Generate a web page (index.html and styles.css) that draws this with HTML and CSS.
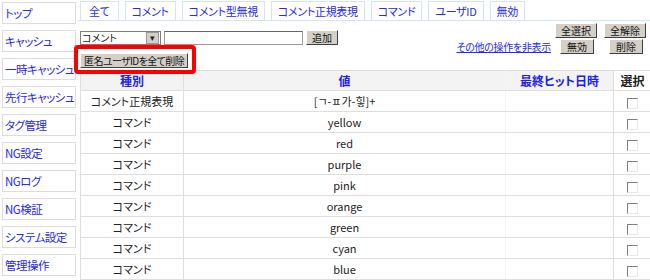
FILE: index.html
```html
<!DOCTYPE html>
<html lang="ja">
<head>
    <meta charset="UTF-8">
    <title>NG設定</title>
    <link rel="stylesheet" href="styles.css">
</head>
<body>
    <div class="page">
        <div class="side">
            <a class="nav">トップ</a>
            <a class="nav">キャッシュ</a>
            <a class="nav">一時キャッシュ</a>
            <a class="nav">先行キャッシュ</a>
            <a class="nav">タグ管理</a>
            <a class="nav">NG設定</a>
            <a class="nav">NGログ</a>
            <a class="nav">NG検証</a>
            <a class="nav">システム設定</a>
            <a class="nav">管理操作</a>
        </div>
        <div class="main">
            <div class="tabs">
                <a class="tab wide">全て</a>
                <a class="tab">コメント</a>
                <a class="tab">コメント型無視</a>
                <a class="tab">コメント正規表現</a>
                <a class="tab">コマンド</a>
                <a class="tab">ユーザID</a>
                <a class="tab">無効</a>
            </div>
            <div class="controls">
                <div class="left">
                    <div class="addrow">
                        <div class="select"><span>コメント</span><span class="arrow">▾</span></div>
                        <input type="text" class="text">
                        <button class="btn">追加</button>
                    </div>
                    <div class="anon">
                        <button class="btn">匿名ユーザIDを全て削除</button>
                        <div class="mark"></div>
                    </div>
                </div>
                <div class="right">
                    <div class="btnrow">
                        <button class="btn">全選択</button>
                        <button class="btn">全解除</button>
                    </div>
                    <div class="btnrow">
                        <a class="hide">その他の操作を非表示</a>
                        <button class="btn">無効</button>
                        <button class="btn">削除</button>
                    </div>
                </div>
            </div>
            <table class="list">
                <thead>
                    <tr>
                        <th class="c1">種別</th>
                        <th class="c2">値</th>
                        <th class="c3">最終ヒット日時</th>
                        <th class="c4">選択</th>
                    </tr>
                </thead>
                <tbody id="rows"></tbody>
            </table>
        </div>
    </div>
    <script>
        const items = [
            ['コメント正規表現', '[ㄱ-ㅍ가-힣]+'],
            ['コマンド', 'yellow'],
            ['コマンド', 'red'],
            ['コマンド', 'purple'],
            ['コマンド', 'pink'],
            ['コマンド', 'orange'],
            ['コマンド', 'green'],
            ['コマンド', 'cyan'],
            ['コマンド', 'blue']
        ];
        document.getElementById('rows').innerHTML = items.map(([kind, value]) =>
            `<tr><td class="c1">${kind}</td><td class="c2">${value}</td><td class="c3"></td><td class="c4"><span class="check"></span></td></tr>`).join('');
    </script>
</body>
</html>
```

FILE: styles.css
```css
body {
    margin: 0;
    font-family: "Noto Sans CJK JP", "Liberation Sans", sans-serif;
    font-feature-settings: "palt";
    font-size: 11px;
    color: #222;
    background: #fff;
    overflow: hidden;
}
.page {
    display: flex;
    width: 650px;
}
.side {
    width: 78px;
    flex: none;
    padding: 2px 0 0 2px;
    box-sizing: border-box;
}
.nav {
    display: block;
    width: 70px;
    height: 20px;
    line-height: 20px;
    border: 1px solid #dcdcdc;
    margin-bottom: 6px;
    padding-left: 2px;
    color: #2828ee;
    font-size: 11.5px;
    letter-spacing: -0.5px;
    white-space: nowrap;
    overflow: hidden;
}
.main {
    flex: 1;
    min-width: 0;
}
.tabs {
    display: flex;
    gap: 6px;
    padding: 1px 0 0 2px;
    border-bottom: 1px solid #cfe6f3;
    height: 19px;
}
.tab {
    border: 1px solid #cfe6f3;
    border-bottom: none;
    height: 19px;
    line-height: 18px;
    padding: 0 6px;
    color: #2828ee;
    font-size: 11px;
    letter-spacing: -0.3px;
    white-space: nowrap;
}
.tab.wide { padding: 0 8px; }
.controls {
    display: flex;
    justify-content: space-between;
    height: 49px;
}
.left {
    padding: 9px 0 0 2px;
}
.addrow {
    display: flex;
    align-items: center;
    gap: 3px;
}
.select {
    width: 78px;
    height: 12px;
    border: 1px solid #7f7f7f;
    display: flex;
    justify-content: space-between;
    align-items: center;
    font-size: 10px;
    line-height: 12px;
    padding-left: 1px;
}
.arrow {
    width: 11px;
    height: 10px;
    background: #d4d0c8;
    border: 1px solid #999;
    font-size: 9px;
    line-height: 10px;
    text-align: center;
    margin-right: 1px;
}
.text {
    width: 137px;
    height: 12px;
    border: 1px solid #999;
    border-top-color: #666;
    padding: 0;
    margin: 0;
}
.btn {
    font-family: inherit;
    font-feature-settings: "palt";
    font-size: 10px;
    line-height: 11px;
    height: 15px;
    padding: 0 5px;
    margin: 0;
    background: #d4d0c8;
    border: 1px solid;
    border-color: #fff #404040 #404040 #fff;
    color: #111;
    white-space: nowrap;
}
.anon {
    position: relative;
    margin-top: 7px;
    width: fit-content;
}
.anon .btn {
    padding: 0 3px;
    letter-spacing: -0.6px;
}
.mark {
    position: absolute;
    left: -6px;
    top: -7px;
    right: -8px;
    bottom: -6px;
    border: 4px solid #f00;
    border-radius: 4px;
}
.right {
    padding: 2px 4px 0 0;
    display: flex;
    flex-direction: column;
    align-items: flex-end;
    gap: 1px;
}
.btnrow {
    display: flex;
    align-items: center;
    gap: 7px;
}
.btnrow:first-child .btn { width: 42px; }
.btnrow:last-child { gap: 0; }
.btnrow:last-child .btn { width: 34px; margin-left: 15px; }
.btnrow:last-child .btn:last-child { margin-right: 3px; }
.hide {
    color: #2828ee;
    text-decoration: underline;
    font-size: 10px;
    letter-spacing: -0.3px;
    margin-right: -6px;
}
.list {
    border-collapse: collapse;
    width: 572px;
    margin-left: 2px;
    table-layout: fixed;
    font-size: 11px;
}
.list th, .list td {
    border: 1px solid #dedede;
    text-align: center;
    height: 20px;
    padding: 0;
}
.list th {
    background: #f3f3f3;
    color: #2020ee;
    font-size: 12px;
    height: 19px;
}
.list th.c4 { background: #fff; color: #222; }
.list .c1 { width: 102px; }
.list .c2 { width: 321px; border-right-color: #f4f4f4; }
.list .c3 { width: 107px; border-left-color: #f4f4f4; }
.list .c4 { width: 37px; }
.check {
    display: inline-block;
    width: 9px;
    height: 9px;
    border: 1px solid;
    border-color: #808080 #e8e8e8 #e8e8e8 #808080;
    background: #fff;
    vertical-align: middle;
}
```
